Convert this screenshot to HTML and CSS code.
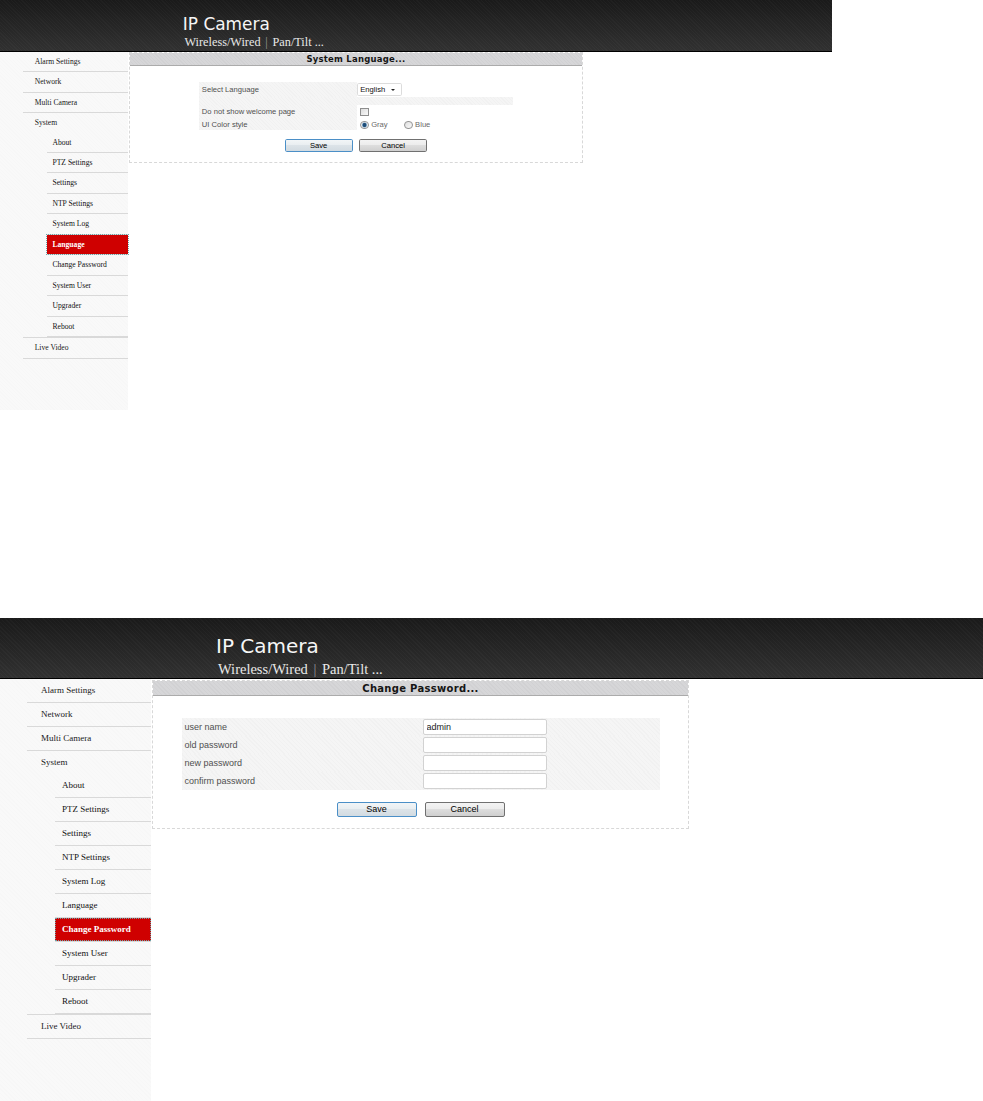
FILE: index.html
```html
<!DOCTYPE html>
<html lang="en">
<head>
    <meta charset="UTF-8">
    <title>IP Camera</title>
    <link rel="stylesheet" href="styles.css">
</head>
<body>
    <!-- Language page (smaller capture) -->
    <div class="screen screen-small">
        <div class="header">
            <div class="brand-name">IP Camera</div>
            <div class="brand-tag">Wireless/Wired <span class="sep">|</span> Pan/Tilt ...</div>
        </div>
        <div class="main">
            <div class="side">
                <ul class="nav">
                    <li><span class="item">Alarm Settings</span></li>
                    <li><span class="item">Network</span></li>
                    <li><span class="item">Multi Camera</span></li>
                    <li>
                        <span class="item">System</span>
                        <ul class="subnav">
                            <li><span class="item">About</span></li>
                            <li><span class="item">PTZ Settings</span></li>
                            <li><span class="item">Settings</span></li>
                            <li><span class="item">NTP Settings</span></li>
                            <li><span class="item">System Log</span></li>
                            <li class="active"><span class="item">Language</span></li>
                            <li><span class="item">Change Password</span></li>
                            <li><span class="item">System User</span></li>
                            <li><span class="item">Upgrader</span></li>
                            <li><span class="item">Reboot</span></li>
                        </ul>
                    </li>
                    <li><span class="item">Live Video</span></li>
                </ul>
            </div>
            <div class="panel panel-lang">
                <div class="panel-title">System Language...</div>
                <table class="form form-lang">
                    <tr class="row-select">
                        <td class="lbl">Select Language</td>
                        <td class="val"><span class="select">English</span></td>
                    </tr>
                    <tr class="row-band"><td colspan="2"></td></tr>
                    <tr class="row-check">
                        <td class="lbl">Do not show welcome page</td>
                        <td class="val"><span class="check"></span></td>
                    </tr>
                    <tr class="row-radio">
                        <td class="lbl">UI Color style</td>
                        <td class="val">
                            <span class="radio checked"></span><span class="opt">Gray</span>
                            <span class="radio"></span><span class="opt">Blue</span>
                        </td>
                    </tr>
                </table>
                <div class="actions">
                    <button class="btn btn-default">Save</button>
                    <button class="btn">Cancel</button>
                </div>
            </div>
        </div>
    </div>

    <div class="gap"></div>

    <!-- Change password page -->
    <div class="screen">
        <div class="header">
            <div class="brand-name">IP Camera</div>
            <div class="brand-tag">Wireless/Wired <span class="sep">|</span> Pan/Tilt ...</div>
        </div>
        <div class="main">
            <div class="side">
                <ul class="nav">
                    <li><span class="item">Alarm Settings</span></li>
                    <li><span class="item">Network</span></li>
                    <li><span class="item">Multi Camera</span></li>
                    <li>
                        <span class="item">System</span>
                        <ul class="subnav">
                            <li><span class="item">About</span></li>
                            <li><span class="item">PTZ Settings</span></li>
                            <li><span class="item">Settings</span></li>
                            <li><span class="item">NTP Settings</span></li>
                            <li><span class="item">System Log</span></li>
                            <li><span class="item">Language</span></li>
                            <li class="active"><span class="item">Change Password</span></li>
                            <li><span class="item">System User</span></li>
                            <li><span class="item">Upgrader</span></li>
                            <li><span class="item">Reboot</span></li>
                        </ul>
                    </li>
                    <li><span class="item">Live Video</span></li>
                </ul>
            </div>
            <div class="panel panel-pass">
                <div class="panel-title">Change Password...</div>
                <table class="form form-pass">
                    <tr>
                        <td class="lbl">user name</td>
                        <td class="val"><input type="text" value="admin"></td>
                    </tr>
                    <tr>
                        <td class="lbl">old password</td>
                        <td class="val"><input type="password"></td>
                    </tr>
                    <tr>
                        <td class="lbl">new password</td>
                        <td class="val"><input type="password"></td>
                    </tr>
                    <tr>
                        <td class="lbl">confirm password</td>
                        <td class="val"><input type="password"></td>
                    </tr>
                </table>
                <div class="actions">
                    <button class="btn btn-default">Save</button>
                    <button class="btn">Cancel</button>
                </div>
            </div>
        </div>
    </div>
</body>
</html>
```

FILE: styles.css
```css
* {
    margin: 0;
    padding: 0;
    box-sizing: border-box;
}

body {
    background: #fff;
    font-family: "Liberation Sans", Arial, sans-serif;
}

/* one captured screen */
.screen {
    width: 983px;
    height: 484px;
    display: flex;
    flex-direction: column;
    overflow: hidden;
}

.screen-small {
    zoom: 0.8465;
}

.gap {
    height: 208px;
}

/* Header */
.header {
    flex: none;
    height: 61px;
    padding-left: 216px;
    border-bottom: 1px solid #000;
    background:
        repeating-linear-gradient(45deg, rgba(255, 255, 255, 0.025) 0 1px, transparent 1px 3px),
        linear-gradient(#1a1a1a, #313131);
}

.brand-name {
    padding-top: 16px;
    font-family: "DejaVu Sans", Verdana, sans-serif;
    font-size: 20px;
    line-height: 24px;
    color: #f6f6f6;
}

.brand-tag {
    margin-top: 3px;
    padding-left: 2px;
    font-family: "Liberation Serif", "Times New Roman", serif;
    font-size: 14.5px;
    line-height: 16px;
    color: #e8e8e8;
}

.brand-tag .sep {
    color: #9a9a9a;
    padding: 0 2px;
}

/* Layout */
.main {
    flex: 1;
    display: flex;
    align-items: flex-start;
}

.side {
    align-self: stretch;
    width: 151px;
    flex: none;
    padding-left: 27px;
    background:
        repeating-linear-gradient(45deg, rgba(0, 0, 0, 0.008) 0 1px, transparent 1px 3px),
        #f9f9f9;
}

/* Sidebar menu */
.nav,
.subnav {
    list-style: none;
}

.nav > li {
    border-bottom: 1px solid #d9d9d9;
}

.nav .item {
    display: block;
    padding-left: 14px;
    font-family: "Liberation Serif", "Times New Roman", serif;
    font-size: 9px;
    line-height: 23px;
    color: #1a1a1a;
    white-space: nowrap;
}

.subnav {
    margin-left: 28px;
}

.subnav li {
    border-bottom: 1px solid #d9d9d9;
}

.subnav .item {
    padding-left: 7px;
    color: #111;
}

.subnav li.active .item {
    background: #cf0000;
    color: #fff;
    font-weight: bold;
    outline: 1px dotted #6fa3a8;
    outline-offset: -1px;
}

/* Content panel */
.panel {
    width: 537px;
    margin: 1px 0 0 1px;
    border: 1px dashed #d8d8d8;
    background: #fff;
}

.panel-title {
    height: 15px;
    padding-top: 1px;
    border-bottom: 1px solid #ababab;
    background:
        repeating-linear-gradient(45deg, rgba(0, 0, 0, 0.025) 0 1px, transparent 1px 3px),
        #d6d6d8;
    text-align: center;
    font-family: "DejaVu Sans", Verdana, sans-serif;
    font-weight: bold;
    font-size: 10px;
    line-height: 13px;
    letter-spacing: 0.3px;
    color: #151515;
}

/* Forms */
.form {
    margin: 0 auto;
    border-collapse: collapse;
}

.form td {
    padding: 0;
    font-size: 9px;
    color: #505050;
    background:
        repeating-linear-gradient(45deg, rgba(0, 0, 0, 0.015) 0 1px, transparent 1px 3px),
        #f5f5f5;
}

.form td.lbl {
    padding-left: 3px;
}

.form-lang {
    width: 370px;
    margin-top: 19px;
}

.form-lang td.lbl {
    width: 186px;
}

.form-lang td.val {
    background: #fff;
}

.row-select td {
    height: 17px;
}

.row-band td {
    height: 10px;
}

.row-check td {
    height: 16px;
}

.row-radio td {
    height: 14px;
}

.select {
    position: relative;
    display: flex;
    align-items: center;
    width: 53px;
    height: 16px;
    padding-left: 3px;
    border: 1px solid #dcdcdc;
    border-radius: 2px;
    background: #fff;
    font-size: 9px;
    color: #111;
}

.select::after {
    content: "";
    position: absolute;
    right: 7px;
    top: 6px;
    border-left: 3px solid transparent;
    border-right: 3px solid transparent;
    border-top: 3px solid #222;
}

.check {
    display: inline-block;
    width: 10px;
    height: 10px;
    margin-left: 4px;
    vertical-align: middle;
    border: 1px solid #8e8e8e;
    background: linear-gradient(135deg, #dcdcdc, #fafafa);
}

.radio {
    display: inline-block;
    width: 10px;
    height: 10px;
    margin-left: 4px;
    vertical-align: middle;
    border: 1px solid #959595;
    border-radius: 50%;
    background: linear-gradient(135deg, #dedede, #fafafa);
}

.radio.checked {
    background: radial-gradient(circle, #1f4d78 0 2px, #7ea6c8 2.5px, #f0f0f0 3.5px);
}

.opt {
    display: inline-block;
    margin-left: 3px;
    margin-right: 13px;
    vertical-align: middle;
    color: #6a6a6a;
}

.form-pass {
    width: 478px;
    margin-top: 22px;
}

.form-pass td {
    height: 18px;
}

.form-pass td.lbl {
    width: 241px;
}

.form-pass input {
    display: block;
    width: 124px;
    height: 16px;
    padding: 0 3px;
    border: 1px solid #d2d2d2;
    border-radius: 2px;
    background: #fff;
    font-family: "Liberation Sans", Arial, sans-serif;
    font-size: 9px;
    color: #222;
}

/* Buttons */
.actions {
    display: flex;
    justify-content: center;
    gap: 8px;
    padding: 12px 0 11px;
}

.panel-lang .actions {
    padding-top: 10px;
    padding-bottom: 12px;
}

.btn {
    width: 80px;
    height: 15px;
    border: 1px solid #707070;
    border-radius: 2px;
    background: linear-gradient(#f3f3f3 0, #ebebeb 50%, #dddddd 50%, #cfcfcf 100%);
    font-family: "Liberation Sans", Arial, sans-serif;
    font-size: 9px;
    color: #000;
    cursor: pointer;
}

.btn-default {
    border-color: #4b8fc7;
    background: linear-gradient(#f2f5f7 0, #e8edf0 50%, #dce3e8 50%, #d2dbe1 100%);
}
```
